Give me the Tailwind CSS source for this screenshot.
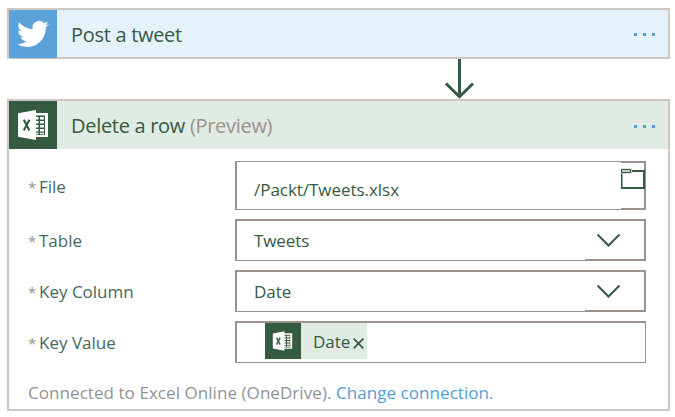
<!DOCTYPE html>
<html lang="en">
<head>
<meta charset="utf-8">
<title>Flow designer</title>
<script src="https://cdn.jsdelivr.net/npm/@tailwindcss/browser@4"></script>
</head>
<body class="h-[417px] w-[675px] overflow-hidden bg-white pl-[7px] pt-2 font-['Open_Sans','Noto_Sans',sans-serif] text-[17px] leading-6 text-[#355a42]">
<svg class="hidden">
  <symbol id="excel" viewBox="0 0 48 48">
    <path d="M25 12h14v24H25z" fill="#fff"/>
    <path d="M26 14.5h10v19.5H26z" fill="#355a42"/>
    <path d="M26 16h3.5v2.5H26zM31 16h4v2.5h-4zM26 20h3.5v2.5H26zM31 20h4v2.5h-4zM26 24h3.5v2.5H26zM31 24h4v2.5h-4zM26 28h3.5v2.5H26zM31 28h4v2.5h-4zM26 31.8h3.5v1.4H26zM31 31.8h4v1.4h-4z" fill="#fff"/>
    <path d="M9 12.2L27 9v30L9 35.8z" fill="#fff"/>
    <path d="M14.8 18.8l5.6 10.8M20.4 18.8l-5.6 10.8" stroke="#355a42" stroke-width="2.1" fill="none"/>
  </symbol>
</svg>

<section class="flex h-[51px] w-[663px] items-center border-2 border-[#cdc6c1] bg-[#e5f2fb]">
  <div class="-mb-px flex h-12 w-12 shrink-0 items-center justify-center bg-[#5ba2d9]">
    <svg class="h-8 w-8" viewBox="0 0 24 24" fill="#fff"><path d="M23.953 4.57a10 10 0 01-2.825.775 4.958 4.958 0 002.163-2.723c-.951.555-2.005.959-3.127 1.184a4.92 4.92 0 00-8.384 4.482C7.69 8.095 4.067 6.13 1.64 3.162a4.822 4.822 0 00-.666 2.475c0 1.71.87 3.213 2.188 4.096a4.904 4.904 0 01-2.228-.616v.06a4.923 4.923 0 003.946 4.827 4.996 4.996 0 01-2.212.085 4.936 4.936 0 004.604 3.417 9.867 9.867 0 01-6.102 2.105c-.39 0-.779-.023-1.17-.067a13.995 13.995 0 007.557 2.209c9.053 0 13.998-7.496 13.998-13.985 0-.21 0-.42-.015-.63A9.935 9.935 0 0024 4.59z"/></svg>
  </div>
  <h1 class="ml-[14px] pt-[2px] text-[20px] tracking-[-0.3px]">Post a tweet</h1>
  <div class="mr-[13px] ml-auto mt-[2px] flex gap-[6px]"><i class="size-[3px] bg-[#559dd6]"></i><i class="size-[3px] bg-[#559dd6]"></i><i class="size-[3px] bg-[#559dd6]"></i></div>
</section>

<svg class="ml-[436px] block h-10 w-8" viewBox="0 0 32 40" fill="none" stroke="#355a42" stroke-width="3"><path d="M16.5 0v38M3 24.5l13.5 13.2L30 24.5"/></svg>

<section class="h-[312px] w-[663px] border-2 border-[#cdc6c1] bg-white">
  <header class="flex h-12 items-center bg-[#e0ebe3]">
    <svg class="h-12 w-12 bg-[#355a42]"><use href="#excel"/></svg>
    <h2 class="ml-[14px] pt-[2px] text-[20px] tracking-[-0.3px]">Delete a row <span class="text-[#9b928e]">(Preview)</span></h2>
    <div class="mr-[13px] ml-auto mt-[2px] flex gap-[6px]"><i class="size-[3px] bg-[#559dd6]"></i><i class="size-[3px] bg-[#559dd6]"></i><i class="size-[3px] bg-[#559dd6]"></i></div>
  </header>

  <div class="flex flex-col gap-[9px] pl-[19px] pt-3">
    <div class="flex h-[49px] items-center">
      <div class="flex w-[207px] gap-[4px] pt-[2px] text-[#44685b]"><span class="w-[7px] text-[15px] text-[#9b928e]">*</span><span>File</span></div>
      <div class="flex h-full w-[411px] justify-between">
        <div class="flex flex-1 items-center border-y border-l-2 border-[#9b928e] pl-[17px] pt-[8px] tracking-[-0.04px]">/Packt/Tweets.xlsx</div>
        <div class="w-[25px] border-2 border-l-0 border-[#9b928e] pt-[5px]">
          <svg class="block h-[23px] w-[24px]" viewBox="0 0 24 23" fill="none"><path d="M.5 3v17M0 20h23V3H9" stroke="#355a42" stroke-width="2"/><path d="M0 .5h11v5H0z" fill="#cdc6c1"/><path d="M.5 1.5h9v3h-9z" fill="#cdc6c1" stroke="#355a42"/></svg>
        </div>
      </div>
    </div>

    <div class="flex h-[42px] items-center">
      <div class="flex w-[207px] gap-[4px] pt-[2px] text-[#44685b]"><span class="w-[7px] text-[15px] text-[#9b928e]">*</span><span>Table</span></div>
      <div class="flex h-full w-[411px]">
        <div class="flex flex-1 items-center border-t-2 border-b border-l-2 border-[#9b928e] pl-[17px] tracking-[-0.1px]">Tweets</div>
        <div class="w-[61px] border-2 border-l-0 border-[#9b928e] pl-[11px] pt-[12px]">
          <svg class="block h-[15px] w-[25px]" viewBox="0 0 25 15" fill="none"><path d="M1.5 1.5l11 11 11-11" stroke="#355a42" stroke-width="2"/></svg>
        </div>
      </div>
    </div>

    <div class="flex h-[42px] items-center">
      <div class="flex w-[207px] gap-[4px] pt-[2px] text-[#44685b]"><span class="w-[7px] text-[15px] text-[#9b928e]">*</span><span>Key Column</span></div>
      <div class="flex h-full w-[411px]">
        <div class="flex flex-1 items-center border-t-2 border-b border-l-2 border-[#9b928e] pl-[17px]">Date</div>
        <div class="w-[61px] border-2 border-l-0 border-[#9b928e] pl-[11px] pt-[12px]">
          <svg class="block h-[15px] w-[25px]" viewBox="0 0 25 15" fill="none"><path d="M1.5 1.5l11 11 11-11" stroke="#355a42" stroke-width="2"/></svg>
        </div>
      </div>
    </div>

    <div class="flex h-[42px] items-center">
      <div class="flex w-[207px] gap-[4px] pt-[2px] text-[#44685b]"><span class="w-[7px] text-[15px] text-[#9b928e]">*</span><span>Key Value</span></div>
      <div class="h-full w-[411px] border border-t-2 border-l-2 border-[#9b928e] pl-7">
        <div class="flex h-9 w-[102px] items-center bg-[#e0ebe3]">
          <svg class="h-9 w-9 shrink-0 bg-[#355a42]" viewBox="0 0 36 36"><use href="#excel" x="2" y="2.5" width="31" height="31"/></svg>
          <span class="ml-[12px] w-[40px] pt-px">Date</span>
          <svg class="mt-[4px] h-[11px] w-[11px]" viewBox="0 0 11 11"><path d="M.7.7l9.6 9.6M10.3.7L.7 10.3" stroke="#355a42" stroke-width="1.7"/></svg>
        </div>
      </div>
    </div>
  </div>
  <p class="mt-[18px] whitespace-nowrap pl-[19px] tracking-[0.06px] text-[#8f9496]">Connected to Excel Online (OneDrive). <a class="text-[#559dd6]">Change connection.</a></p>
</section>
</body>
</html>
